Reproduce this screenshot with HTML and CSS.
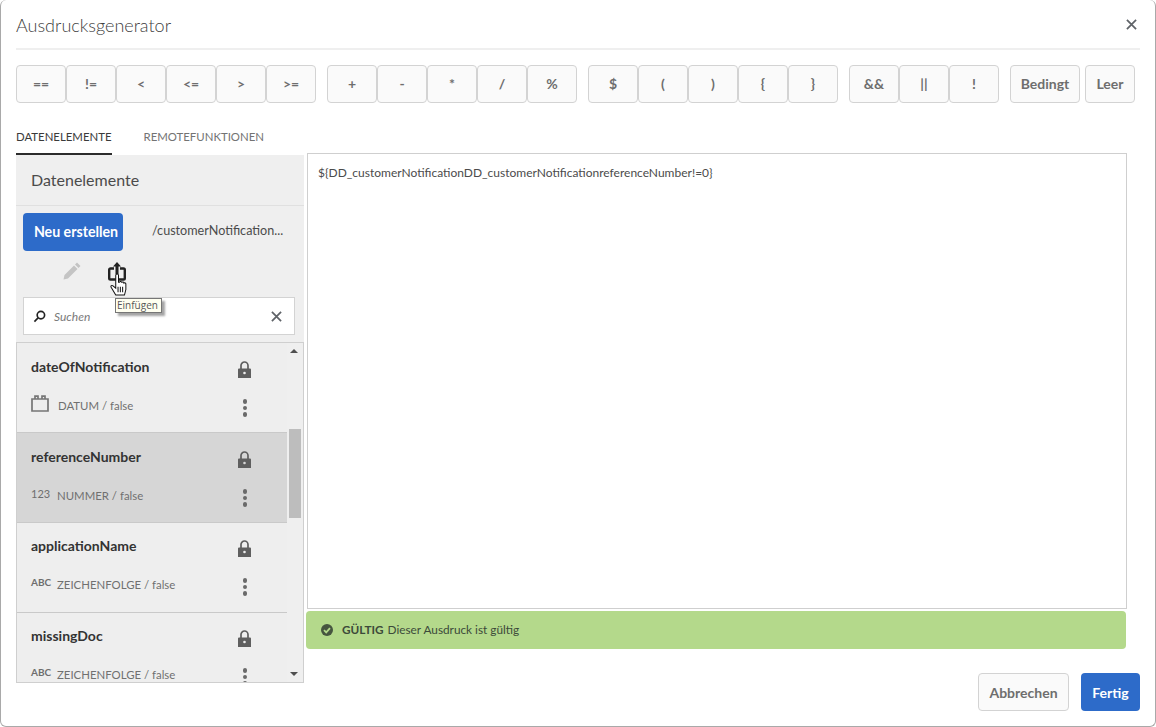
FILE: index.html
```html
<!DOCTYPE html>
<html lang="de">
<head>
<meta charset="utf-8">
<title>Ausdrucksgenerator</title>
<link rel="stylesheet" href="styles.css">
</head>
<body>
<div class="dialog">
  <header class="head">
    <h1 class="title">Ausdrucksgenerator</h1>
    <svg class="close" viewBox="0 0 12 12"><path d="M1 1l10 10M11 1L1 11"/></svg>
  </header>
  <div class="ops">
    <div class="group"><button class="op">==</button><button class="op">!=</button><button class="op">&lt;</button><button class="op">&lt;=</button><button class="op">&gt;</button><button class="op">&gt;=</button></div>
    <div class="group"><button class="op">+</button><button class="op">-</button><button class="op">*</button><button class="op">/</button><button class="op">%</button></div>
    <div class="group"><button class="op">$</button><button class="op">(</button><button class="op">)</button><button class="op">{</button><button class="op">}</button></div>
    <div class="group"><button class="op">&amp;&amp;</button><button class="op">||</button><button class="op">!</button></div>
    <button class="op wide-a">Bedingt</button>
    <button class="op wide-b">Leer</button>
  </div>
  <nav class="tabs"><span class="tab active">DATENELEMENTE</span><span class="tab">REMOTEFUNKTIONEN</span></nav>
  <div class="main">
    <aside class="side">
      <div class="side-title">Datenelemente</div>
      <div class="side-tools">
        <button class="create">Neu erstellen</button>
        <span class="path">/customerNotification...</span>
      </div>
      <div class="actions">
        <svg class="pencil" viewBox="0 0 18 18"><path d="M14 .5l3.500 3.500-2 2L12 2.500z"/><path d="M11 3.500L14.500 7 5 16.500 .5 17.500l1-4.500z"/></svg>
        <svg class="insert" viewBox="0 0 18 19"><path class="insert-frame" d="M6 6.500H2.500a1.300 1.300 0 0 0-1.300 1.300v8.400a1.300 1.300 0 0 0 1.300 1.300h13a1.300 1.300 0 0 0 1.300-1.300V7.800a1.300 1.300 0 0 0-1.300-1.300H12"/><path class="insert-arrow" d="M9 0l4 4.500H10.500V12h-3V4.500H5z"/></svg>
        <svg class="hand" viewBox="0 0 18 25"><path d="M6 2.500a1.500 1.500 0 0 1 3 0V10l1 0a1.300 1.300 0 0 1 2.500 0.500a1.300 1.300 0 0 1 2.500 0.500a1.200 1.200 0 0 1 2 1V18l-1.500 6H6L1 15.500c-.8-1.500.8-2.500 2-1.500l3 2.500z"/><path d="M8.500 15v6M11 15v6M13.500 15v6"/></svg>
        <span class="tip">Einfügen</span>
      </div>
      <div class="search">
        <svg class="lens" viewBox="0 0 14 14"><circle cx="8.500" cy="5.500" r="4"/><path d="M5.500 8.500L1.500 12.500"/></svg>
        <span class="search-text">Suchen</span>
        <svg class="clear" viewBox="0 0 12 12"><path d="M1 1l10 10M11 1L1 11"/></svg>
      </div>
      <div class="list">
        <div class="items">
          <div class="item">
            <div class="row"><span class="name">dateOfNotification</span><svg class="lock" viewBox="0 0 13 17"><path d="M3 8V4.500a3.500 3.500 0 0 1 7 0V8" fill="none" stroke="#5f5f5f" stroke-width="1.700"/><path d="M1 7.500h11a1 1 0 0 1 1 1V17H0V8.500a1 1 0 0 1 1-1z"/><circle cx="6.500" cy="12" r="1.300" fill="#eee"/></svg></div>
            <div class="row meta"><span class="type"><svg class="cal" viewBox="0 0 18 17"><path d="M1 4h16v12H1zM4 4V1.200h3V4M11 4V1.200h3V4"/></svg><span class="type-text">DATUM / false</span></span><span class="dots"><i></i><i></i><i></i></span></div>
          </div>
          <div class="item selected">
            <div class="row"><span class="name">referenceNumber</span><svg class="lock" viewBox="0 0 13 17"><path d="M3 8V4.500a3.500 3.500 0 0 1 7 0V8" fill="none" stroke="#5f5f5f" stroke-width="1.700"/><path d="M1 7.500h11a1 1 0 0 1 1 1V17H0V8.500a1 1 0 0 1 1-1z"/><circle cx="6.500" cy="12" r="1.300" fill="#d6d6d6"/></svg></div>
            <div class="row meta"><span class="type"><span class="badge num">123</span><span class="type-text">NUMMER / false</span></span><span class="dots"><i></i><i></i><i></i></span></div>
          </div>
          <div class="item">
            <div class="row"><span class="name">applicationName</span><svg class="lock" viewBox="0 0 13 17"><path d="M3 8V4.500a3.500 3.500 0 0 1 7 0V8" fill="none" stroke="#5f5f5f" stroke-width="1.700"/><path d="M1 7.500h11a1 1 0 0 1 1 1V17H0V8.500a1 1 0 0 1 1-1z"/><circle cx="6.500" cy="12" r="1.300" fill="#eee"/></svg></div>
            <div class="row meta"><span class="type"><span class="badge">ABC</span><span class="type-text">ZEICHENFOLGE / false</span></span><span class="dots"><i></i><i></i><i></i></span></div>
          </div>
          <div class="item">
            <div class="row"><span class="name">missingDoc</span><svg class="lock" viewBox="0 0 13 17"><path d="M3 8V4.500a3.500 3.500 0 0 1 7 0V8" fill="none" stroke="#5f5f5f" stroke-width="1.700"/><path d="M1 7.500h11a1 1 0 0 1 1 1V17H0V8.500a1 1 0 0 1 1-1z"/><circle cx="6.500" cy="12" r="1.300" fill="#eee"/></svg></div>
            <div class="row meta"><span class="type"><span class="badge">ABC</span><span class="type-text">ZEICHENFOLGE / false</span></span><span class="dots"><i></i><i></i><i></i></span></div>
          </div>
        </div>
        <div class="scrollbar">
          <span class="arrow up"></span>
          <span class="thumb"></span>
          <span class="arrow down"></span>
        </div>
      </div>
    </aside>
    <section class="work">
      <div class="editor">${DD_customerNotificationDD_customerNotificationreferenceNumber!=0}</div>
      <div class="valid">
        <svg class="check" viewBox="0 0 12 12"><circle cx="6" cy="6" r="6"/><path d="M3 6.200l2.200 2.200L9 4.200"/></svg>
        <strong class="valid-label">GÜLTIG</strong><span>Dieser Ausdruck ist gültig</span>
      </div>
      <footer class="foot">
        <button class="btn cancel">Abbrechen</button>
        <button class="btn done">Fertig</button>
      </footer>
    </section>
  </div>
</div>
</body>
</html>
```
FILE: styles.css
```css
* { box-sizing: border-box; }
html, body { margin: 0; height: 100%; }
body {
  width: 1156px;
  height: 727px;
  overflow: hidden;
  background: #fff;
  font-family: "Lato", "Open Sans", sans-serif;
  color: #4b4b4b;
}
button { font-family: inherit; margin: 0; cursor: pointer; }
.dialog {
  width: 1156px;
  height: 727px;
  background: #fff;
  border: 1px solid #a9a9a9;
  border-top: 0;
  border-radius: 6px;
  padding: 0 15px;
  display: flex;
  flex-direction: column;
}
.head {
  height: 50px;
  flex: none;
  border-bottom: 2px solid #efefef;
  display: flex;
  align-items: center;
  justify-content: space-between;
}
.title {
  margin: 0;
  font-size: 18px;
  font-weight: 300;
  color: #404040;
  position: relative;
  top: 1px;
}
.close { width: 11px; height: 11px; margin-right: 3px; }
.close path, .clear path { fill: none; stroke: #5f6368; stroke-width: 1.900; }
.ops {
  display: flex;
  margin-top: 15px;
  height: 38px;
  flex: none;
}
.group { display: flex; margin-right: 11px; }
.op {
  width: 50px;
  height: 38px;
  background: #fafafa;
  border: 1px solid #d3d3d3;
  border-radius: 4px;
  font-size: 14px;
  font-weight: 700;
  color: #6e6e6e;
  padding: 0 0 1px;
}
.wide-a { width: 70px; margin-right: 5px; padding-bottom: 2px; }
.wide-b { width: 50px; padding-bottom: 2px; }
.tabs {
  display: flex;
  margin-top: 22px;
  height: 30px;
  flex: none;
  font-size: 11.400px;
}
.tab {
  color: #737373;
  margin-right: 32px;
  height: 30px;
  padding-top: 4px;
  line-height: 15px;
}
.tab.active { color: #3a3a3a; border-bottom: 2px solid #2c2c2c; }
.main { display: flex; flex: none; align-items: flex-start; }
.side {
  width: 288px;
  background: #efefef;
  flex: none;
  display: flex;
  flex-direction: column;
}
.side-title {
  height: 51px;
  border-bottom: 1px solid #e0e0e0;
  font-size: 16px;
  line-height: 49px;
  padding-left: 15px;
  color: #4b4b4b;
  flex: none;
}
.side-tools {
  display: flex;
  align-items: flex-start;
  margin: 7px 0 0 7px;
  height: 38px;
  flex: none;
}
.create {
  width: 100px;
  height: 38px;
  background: #2d6bc9;
  color: #fff;
  border: 0;
  border-radius: 4px;
  font-size: 14.200px;
  font-weight: 700;
  padding: 0 0 1px 6px;
}
.path { margin: 9px 0 0 29px; font-size: 12.600px; color: #4b4b4b; line-height: 17px; }
.actions { height: 46px; flex: none; position: relative; }
.pencil { position: absolute; left: 47px; top: 11px; width: 18px; height: 18px; fill: #c4c4c4; }
.insert { position: absolute; left: 92px; top: 11px; width: 18px; height: 19px; }
.insert-frame { fill: none; stroke: #222; stroke-width: 2.400; }
.insert-arrow { fill: #222; }
.hand { position: absolute; left: 94px; top: 22px; width: 17px; height: 23px; fill: #fff; stroke: #111; stroke-width: 1.100; }
.tip {
  position: absolute;
  left: 99px;
  top: 47px;
  width: 47px;
  height: 15px;
  padding-left: 1px;
  background: #fffff0;
  border: 1px solid #767676;
  box-shadow: 3px 3px 2px rgba(90,90,90,.55);
  font-family: "Open Sans", sans-serif;
  font-size: 10px;
  line-height: 13px;
  color: #575757;
  white-space: nowrap;
  z-index: 2;
}
.search {
  margin-left: 7px;
  width: 272px;
  height: 38px;
  flex: none;
  background: #fff;
  border: 1px solid #d3d3d3;
  display: flex;
  align-items: center;
  padding: 0 12px 0 9px;
}
.lens { width: 13px; height: 13px; fill: none; stroke: #222; stroke-width: 1.800; flex: none; }
.search-text { font-size: 12px; font-style: italic; color: #7a7a7a; margin-left: 8px; flex: 1; }
.clear { width: 11px; height: 11px; }
.list {
  margin-top: 7px;
  height: 341px;
  flex: none;
  border: 1px solid #cfcfcf;
  display: flex;
  overflow: hidden;
}
.items { width: 270px; flex: none; }
.item {
  height: 90px;
  border-bottom: 1px solid #c9c9c9;
  background: #eee;
  padding: 12px 14px 0;
}
.item:nth-child(n+3) { padding-top: 11px; }
.item:last-child { border-bottom: 0; }
.item.selected { background: #d6d6d6; }
.row { display: flex; justify-content: space-between; align-items: center; height: 22px; }
.name { font-size: 14px; font-weight: 700; color: #333; }
.lock { width: 13px; height: 17px; fill: #5f5f5f; margin: 6px 22px 0 0; }
.meta { margin-top: 17px; }
.type { display: flex; align-items: center; }
.cal { width: 18px; height: 17px; fill: none; stroke: #767676; stroke-width: 1.700; margin-right: 9px; position: relative; top: -2px; }
.badge { font-size: 10px; font-weight: 700; color: #6e6e6e; width: 26px; position: relative; top: -2px; }
.badge.num { font-weight: 400; font-size: 11px; }
.type-text { font-size: 11.400px; color: #707070; }
.dots { display: flex; flex-direction: column; gap: 2px; margin-right: 26px; position: relative; top: 3px; }
.dots i { width: 4.500px; height: 4.500px; border-radius: 50%; background: #6a6a6a; display: block; }
.scrollbar { width: 16px; flex: none; background: #efefef; position: relative; }
.thumb { position: absolute; left: 2px; top: 86px; width: 12px; height: 89px; background: #bdbdbd; }
.arrow { position: absolute; left: 3px; width: 0; height: 0; border-left: 4px solid transparent; border-right: 4px solid transparent; }
.arrow.up { top: 6px; border-bottom: 4px solid #4f4f4f; }
.arrow.down { bottom: 6px; border-top: 4px solid #4f4f4f; }
.work { margin: -2px 0 0 2px; flex: 1; }
.editor {
  margin-left: 1px;
  width: 820px;
  height: 456px;
  border: 1px solid #cfcfcf;
  font-size: 12px;
  color: #4b4b4b;
  padding: 11px 10px;
  line-height: 16px;
}
.valid {
  margin-top: 2px;
  width: 820px;
  height: 38px;
  background: #b4d98b;
  border-radius: 4px;
  display: flex;
  align-items: center;
  padding: 0 0 1px 15px;
  font-size: 11.800px;
  color: #3c4a3a;
}
.check { width: 12px; height: 12px; margin-right: 9px; flex: none; }
.check circle { fill: #46553f; }
.check path { fill: none; stroke: #b4d98b; stroke-width: 1.800; }
.valid-label { margin-right: 4px; font-weight: 700; }
.foot {
  display: flex;
  justify-content: flex-end;
  margin-top: 24px;
}
.btn { height: 38px; border-radius: 4px; font-size: 14px; font-weight: 700; padding: 0; }
.cancel { width: 91px; background: #fafafa; border: 1px solid #d3d3d3; color: #6e6e6e; margin-right: 12px; }
.done { width: 59px; background: #2d6bc9; border: 0; color: #fff; }
```
